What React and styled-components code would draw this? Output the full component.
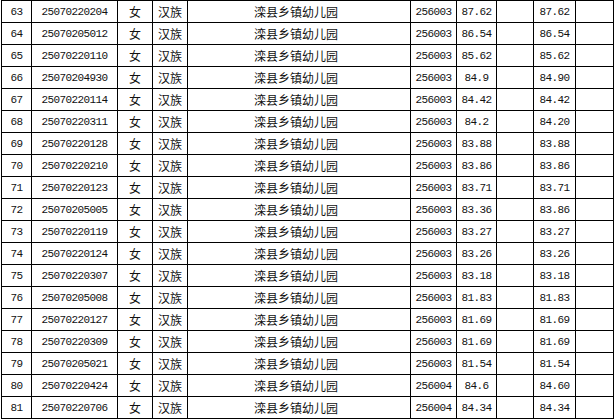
import styled, { createGlobalStyle } from "styled-components";

const GlobalStyle = createGlobalStyle`
  html, body {
    margin: 0;
    padding: 0;
    background: #fff;
  }
`;

const rows = [
  ["63", "25070220204", "256003", "87.62", "87.62"],
  ["64", "25070205012", "256003", "86.54", "86.54"],
  ["65", "25070220110", "256003", "85.62", "85.62"],
  ["66", "25070204930", "256003", "84.9", "84.90"],
  ["67", "25070220114", "256003", "84.42", "84.42"],
  ["68", "25070220311", "256003", "84.2", "84.20"],
  ["69", "25070220128", "256003", "83.88", "83.88"],
  ["70", "25070220210", "256003", "83.86", "83.86"],
  ["71", "25070220123", "256003", "83.71", "83.71"],
  ["72", "25070205005", "256003", "83.36", "83.86"],
  ["73", "25070220119", "256003", "83.27", "83.27"],
  ["74", "25070220124", "256003", "83.26", "83.26"],
  ["75", "25070220307", "256003", "83.18", "83.18"],
  ["76", "25070205008", "256003", "81.83", "81.83"],
  ["77", "25070220127", "256003", "81.69", "81.69"],
  ["78", "25070220309", "256003", "81.69", "81.69"],
  ["79", "25070205021", "256003", "81.54", "81.54"],
  ["80", "25070220424", "256004", "84.6", "84.60"],
  ["81", "25070220706", "256004", "84.34", "84.34"],
];

const widths = [30, 86, 35, 35, 223, 46, 40, 37, 42, 38];

const App = () => {
  return (
    <>
      <GlobalStyle />
      <Table>
        <colgroup>
          {widths.map((w, i) => (
            <col key={i} style={{ width: w }} />
          ))}
        </colgroup>
        <tbody>
          {rows.map(([no, id, code, score, total]) => (
            <tr key={no}>
              <Cell>{no}</Cell>
              <Cell>{id}</Cell>
              <Cell $cjk>女</Cell>
              <Cell $cjk>汉族</Cell>
              <Cell $cjk $shift>滦县乡镇幼儿园</Cell>
              <Cell>{code}</Cell>
              <Cell>{score}</Cell>
              <Cell />
              <Cell>{total}</Cell>
              <Cell />
            </tr>
          ))}
        </tbody>
      </Table>
    </>
  );
};

const Table = styled.table`
  margin-left: 1px;
  width: 613px;
  table-layout: fixed;
  border-collapse: collapse;
  color: #111;
`;

const Cell = styled.td`
  height: 21px;
  padding: 0 ${(p) => (p.$shift ? "6px" : "0")} 0 0;
  border: 1px solid #000;
  text-align: center;
  white-space: nowrap;
  overflow: hidden;
  font-family: ${(p) =>
    p.$cjk
      ? `"Noto Sans CJK SC", sans-serif`
      : `"Liberation Mono", "DejaVu Sans Mono", monospace`};
  font-size: ${(p) => (p.$cjk ? "12px" : "11px")};
  letter-spacing: ${(p) => (p.$cjk ? "0" : "-0.6px")};
  line-height: 20px;
`;

export default App;
